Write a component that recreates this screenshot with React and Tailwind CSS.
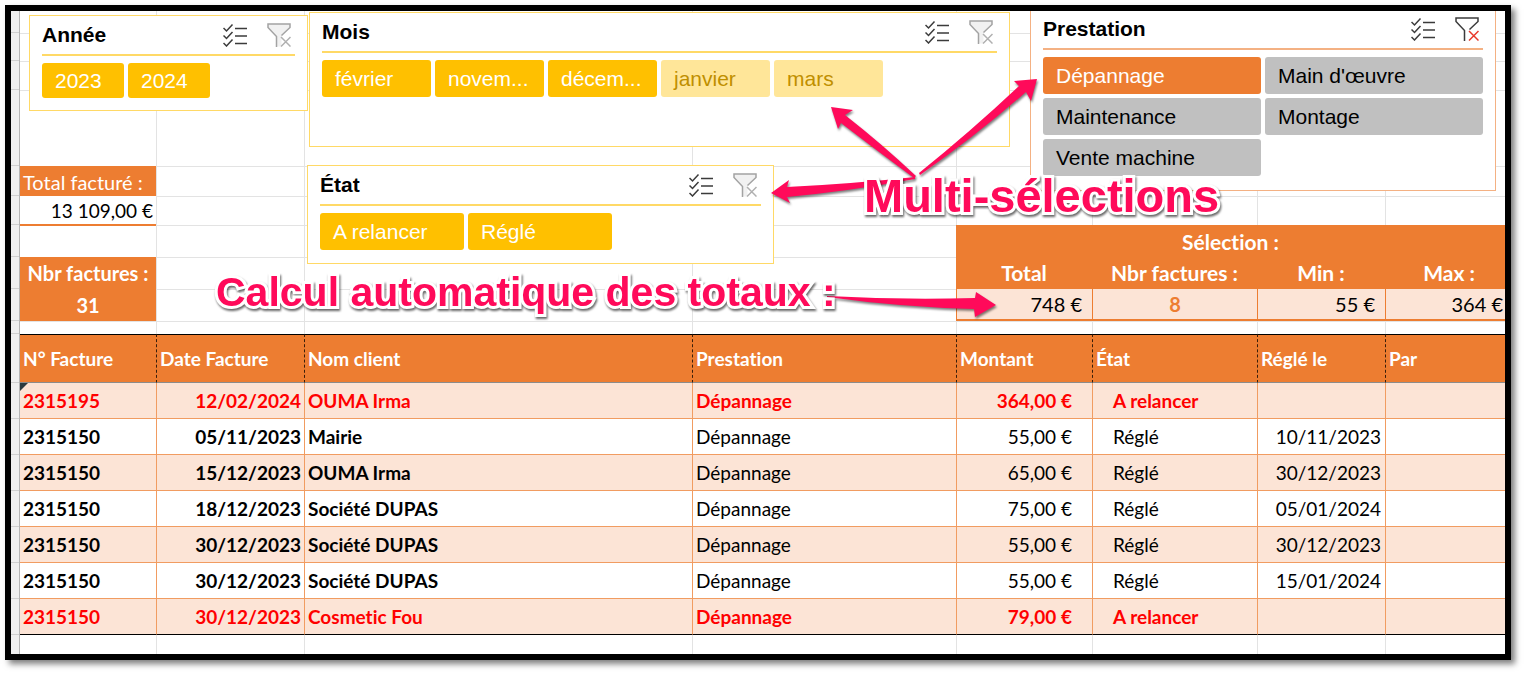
import clsx from "clsx";

const invoices = [
  { number: "2315195", date: "12/02/2024", client: "OUMA Irma", service: "Dépannage", amount: "364,00 €", status: "A relancer", paid: "" },
  { number: "2315150", date: "05/11/2023", client: "Mairie", service: "Dépannage", amount: "55,00 €", status: "Réglé", paid: "10/11/2023" },
  { number: "2315150", date: "15/12/2023", client: "OUMA Irma", service: "Dépannage", amount: "65,00 €", status: "Réglé", paid: "30/12/2023" },
  { number: "2315150", date: "18/12/2023", client: "Société DUPAS", service: "Dépannage", amount: "75,00 €", status: "Réglé", paid: "05/01/2024" },
  { number: "2315150", date: "30/12/2023", client: "Société DUPAS", service: "Dépannage", amount: "55,00 €", status: "Réglé", paid: "30/12/2023" },
  { number: "2315150", date: "30/12/2023", client: "Société DUPAS", service: "Dépannage", amount: "55,00 €", status: "Réglé", paid: "15/01/2024" },
  { number: "2315150", date: "30/12/2023", client: "Cosmetic Fou", service: "Dépannage", amount: "79,00 €", status: "A relancer", paid: "" },
];

const headers = ["N° Facture", "Date Facture", "Nom client", "Prestation", "Montant", "État", "Réglé le", "Par"];

const columns = "grid-cols-[136fr_148fr_388fr_264fr_136fr_165fr_128fr_120fr]";
const rows = "grid-rows-[22px_28px_29px_76px_30px_29px_32px_32px_32px_13px]";

const ListIcon = () => (
  <svg className="size-6" viewBox="0 0 24 24" fill="none" stroke="#3b3b3b" strokeWidth="1.5" aria-hidden="true">
    <path d="M.5 5l3 3L9.500 1.500M.5 12.500l3 3L9.500 9M.5 20l3 3L9.500 16.500" />
    <path d="M12 5.500h12M12 13h12M12 20.500h12" />
  </svg>
);

const FilterIcon = ({ active }) => (
  <svg className="size-6" viewBox="0 0 24 24" fill="none" strokeWidth="1.500" aria-hidden="true">
    <path d="M1 1H23V4.500L14.500 13V23.500H9.500V13.500L1 4.500Z" fill={active ? "#fff" : "#f1f1f1"} />
    <path d="M14.500 12.500L23 4.500V1H1V4.500L9.500 13.500V24" stroke={active ? "#3b3b3b" : "#a3a3a3"} />
    <path d="M14 14l9.500 9.500M23.500 14l-9.500 9.500" stroke={active ? "#e8392b" : "#b0b0b0"} />
  </svg>
);

const itemColors = {
  yellow: "bg-[#ffc000] text-white",
  faded: "bg-[#ffe699] text-[#bf8f00]",
  orange: "bg-[#ed7d31] text-white",
  gray: "bg-[#c0c0c0] text-black",
};

const Slicer = ({ title, items, className, listClass, itemClass = "h-[37px]", active, accent = "border-[#ffd966]" }) => (
  <section className={clsx("border bg-white px-3 font-['Liberation_Sans',sans-serif] text-[21px]", accent, className)}>
    <header className={clsx("flex h-10 items-center justify-between border-b-2 pr-1", accent)}>
      <h2 className="font-bold leading-6">{title}</h2>
      <div className="flex gap-5">
        <button type="button" aria-label="Sélection multiple"><ListIcon /></button>
        <button type="button" aria-label="Effacer le filtre"><FilterIcon active={active} /></button>
      </div>
    </header>
    <div className={clsx("mt-[7px] gap-1", listClass)}>
      {items.map(([label, color]) => (
        <button key={label} type="button" className={clsx("rounded-[3px] pl-[13px] text-left", itemClass, itemColors[color])}>
          {label}
        </button>
      ))}
    </div>
  </section>
);

const GridLines = () => (
  <div className={clsx("col-start-1 row-start-1 grid", columns, rows)} aria-hidden="true">
    {Array.from({ length: 80 }, (_, i) => (
      <div key={i} className={clsx("border-[#e3e3e3]", i >= 8 && "border-t", i % 8 > 0 && "border-l")} />
    ))}
  </div>
);

const Totals = () => (
  <div className={clsx("col-start-1 row-start-1 grid", columns, rows)}>
    <dl className="col-start-1 row-start-5 row-span-2">
      <dt className="h-[30px] bg-[#ed7d31] pl-[3px] text-[20px] leading-[32px] text-white">Total facturé :</dt>
      <dd className="h-[30px] border-b-2 border-[#ed7d31] bg-white pr-[3px] text-right leading-[30px]">13 109,00 €</dd>
    </dl>
    <dl className="col-start-1 row-start-8 row-span-2 bg-[#ed7d31] text-center text-[20px] font-bold leading-[32px] text-white">
      <dt>Nbr factures :</dt>
      <dd>31</dd>
    </dl>
    <table className="col-start-5 col-span-4 row-start-7 row-span-3 h-24 w-full table-fixed border-separate border-spacing-0">
      <colgroup>
        <col className="w-[136px]" />
        <col className="w-[165px]" />
        <col className="w-[128px]" />
        <col className="w-[120px]" />
      </colgroup>
      <thead className="bg-[#ed7d31] text-[21px] text-white">
        <tr><th colSpan={4} className="h-8 pt-[2px]">Sélection :</th></tr>
        <tr>
          <th className="h-8">Total</th>
          <th>Nbr factures :</th>
          <th>Min :</th>
          <th className="pl-2">Max :</th>
        </tr>
      </thead>
      <tbody>
        <tr className="bg-[#fce4d6] text-right text-[20px] *:border-b-2 *:border-l *:border-[#ed7d31]">
          <td className="h-8 pr-[10px]">748 €</td>
          <td className="text-center font-bold text-[#ed7d31]">8</td>
          <td className="pr-[10px]">55 €</td>
          <td className="pr-[2px]">364 €</td>
        </tr>
      </tbody>
    </table>
  </div>
);

const Slicers = () => (
  <div className="col-start-1 row-start-1 flex items-start overflow-hidden pl-[9px] pr-[9px]">
    <Slicer
      title="Année"
      className="mt-1 h-24 w-[279px] shrink-0"
      listClass="flex"
      itemClass="h-[35px] w-[82px]"
      items={[["2023", "yellow"], ["2024", "yellow"]]}
    />
    <div className="ml-px mt-px flex min-w-0 flex-1 flex-col gap-[18px]">
      <Slicer
        title="Mois"
        className="h-[135px]"
        listClass="flex"
        itemClass="h-[37px] w-[109px]"
        items={[["février", "yellow"], ["novem...", "yellow"], ["décem...", "yellow"], ["janvier", "faded"], ["mars", "faded"]]}
      />
      <Slicer
        title="État"
        className="-ml-[2px] h-[99px] w-[467px]"
        listClass="flex"
        itemClass="h-[37px] w-36"
        items={[["A relancer", "yellow"], ["Réglé", "yellow"]]}
      />
    </div>
    <Slicer
      title="Prestation"
      active
      accent="border-[#f4b183]"
      className="-mt-[2px] ml-5 h-[182px] w-[466px] shrink-0"
      listClass="grid grid-cols-2"
      items={[["Dépannage", "orange"], ["Main d'œuvre", "gray"], ["Maintenance", "gray"], ["Montage", "gray"], ["Vente machine", "gray"]]}
    />
  </div>
);

const InvoiceTable = () => (
  <table className="w-full table-fixed border-separate border-spacing-0">
    <colgroup>
      <col className="w-[136px]" />
      <col className="w-[148px]" />
      <col className="w-[388px]" />
      <col className="w-[264px]" />
      <col className="w-[136px]" />
      <col className="w-[165px]" />
      <col className="w-[128px]" />
      <col className="w-[120px]" />
    </colgroup>
    <thead>
      <tr className="bg-[#ed7d31] text-left text-white">
        {headers.map((h, i) => (
          <th key={h} className={clsx("h-[49px] border-b border-t border-b-[#8c8c8c] border-t-black pl-[3px]", i > 0 && "border-l border-l-[#3a1e0a] [border-left-style:dashed]")}>
            {h}
          </th>
        ))}
      </tr>
    </thead>
    <tbody>
      {invoices.map((inv, i) => {
        const late = inv.status === "A relancer";
        const cell = clsx("h-9 border-b", i === invoices.length - 1 ? "border-b-black" : "border-b-[#f19c61]");
        const inner = clsx(cell, "border-l border-l-[#f19c61]");
        return (
          <tr key={i} className={clsx(i % 2 === 0 && "bg-[#fce4d6]", late && "font-bold text-[#ff0000]")}>
            <td className={clsx(cell, "relative pl-[3px] font-bold")}>
              {i === 0 && <span className="absolute left-0 top-0 size-2 bg-[#2b3a3f] [clip-path:polygon(0_0,100%_0,0_100%)]" />}
              {inv.number}
            </td>
            <td className={clsx(inner, "pr-[3px] text-right font-bold")}>{inv.date}</td>
            <td className={clsx(inner, "pl-[3px] font-bold")}>{inv.client}</td>
            <td className={clsx(inner, "pl-[3px]")}>{inv.service}</td>
            <td className={clsx(inner, "pr-5 text-right")}>{inv.amount}</td>
            <td className={clsx(inner, "pl-5")}>{inv.status}</td>
            <td className={clsx(inner, "pr-1 text-right")}>{inv.paid}</td>
            <td className={inner} />
          </tr>
        );
      })}
    </tbody>
  </table>
);

const noteClass = "absolute whitespace-nowrap font-['Liberation_Sans',sans-serif] font-bold text-[#ff0a5a] [-webkit-text-stroke:6px_white] [paint-order:stroke] drop-shadow-[1px_2px_1px_rgba(0,0,0,0.6)]";

// Callouts float over the cells and the slicers
const Callouts = () => (
  <div className="pointer-events-none absolute inset-0">
    <svg className="absolute left-0 top-0 h-[330px] w-[1040px] drop-shadow-[1px_2px_1px_rgba(0,0,0,0.5)]" viewBox="20 11 1040 330" fill="#ff0a5a" aria-hidden="true">
      <path d="M831 107L853 110L845 115Q882 144 916 176L914 178Q876 150 841 123L838 129Z" />
      <path d="M1037 79L1014 81L1019 86Q970 132 919 173L920 175Q976 136 1026 92L1031 101Z" />
      <path d="M771 193L789 180L787 187Q850 184 915 177V179Q850 191 787 197L790 203Z" />
      <path d="M827 296Q900 300 975 298L976 292L996 305L975 317L974 309Q900 307 827 297Z" />
    </svg>
    <p className={clsx(noteClass, "left-[844px] top-[159px] text-[47px] leading-[52px]")}>Multi-sélections</p>
    <p className={clsx(noteClass, "left-[196px] top-[257px] text-[41px] leading-[48px]")}>Calcul automatique des totaux :</p>
  </div>
);

const rowHeights = ["h-[22px]", "h-[28px]", "h-[29px]", "h-[76px]", "h-[30px]", "h-[29px]", "h-8", "h-8", "h-8", "h-[13px]", "h-[49px]", "h-9", "h-9", "h-9", "h-9", "h-9", "h-9", "h-9"];

const App = () => (
  <div className="bg-white pb-3 pl-[5px] pr-[13px] pt-[5px] font-[Lato,sans-serif] text-[19px] leading-6 text-black [font-variant-ligatures:none]">
    <main className="flex overflow-hidden border-[6px] border-black bg-white shadow-[4px_4px_6px_rgba(0,0,0,0.5)]">
      <div className="w-[9px] shrink-0 border-r border-[#b5b5b5] bg-[#efefef]" aria-hidden="true">
        {rowHeights.map((h, i) => (
          <div key={i} className={clsx("border-b border-[#d0d0d0]", h)} />
        ))}
      </div>
      <div className="relative min-w-0 flex-1">
        <div className="grid">
          <GridLines />
          <Totals />
          <Slicers />
        </div>
        <InvoiceTable />
        <div className={clsx("grid h-[19px]", columns)} aria-hidden="true">
          {headers.map((h, i) => <div key={h} className={clsx("border-[#e3e3e3]", i > 0 && "border-l")} />)}
        </div>
        <Callouts />
      </div>
    </main>
  </div>
);

export default App;
